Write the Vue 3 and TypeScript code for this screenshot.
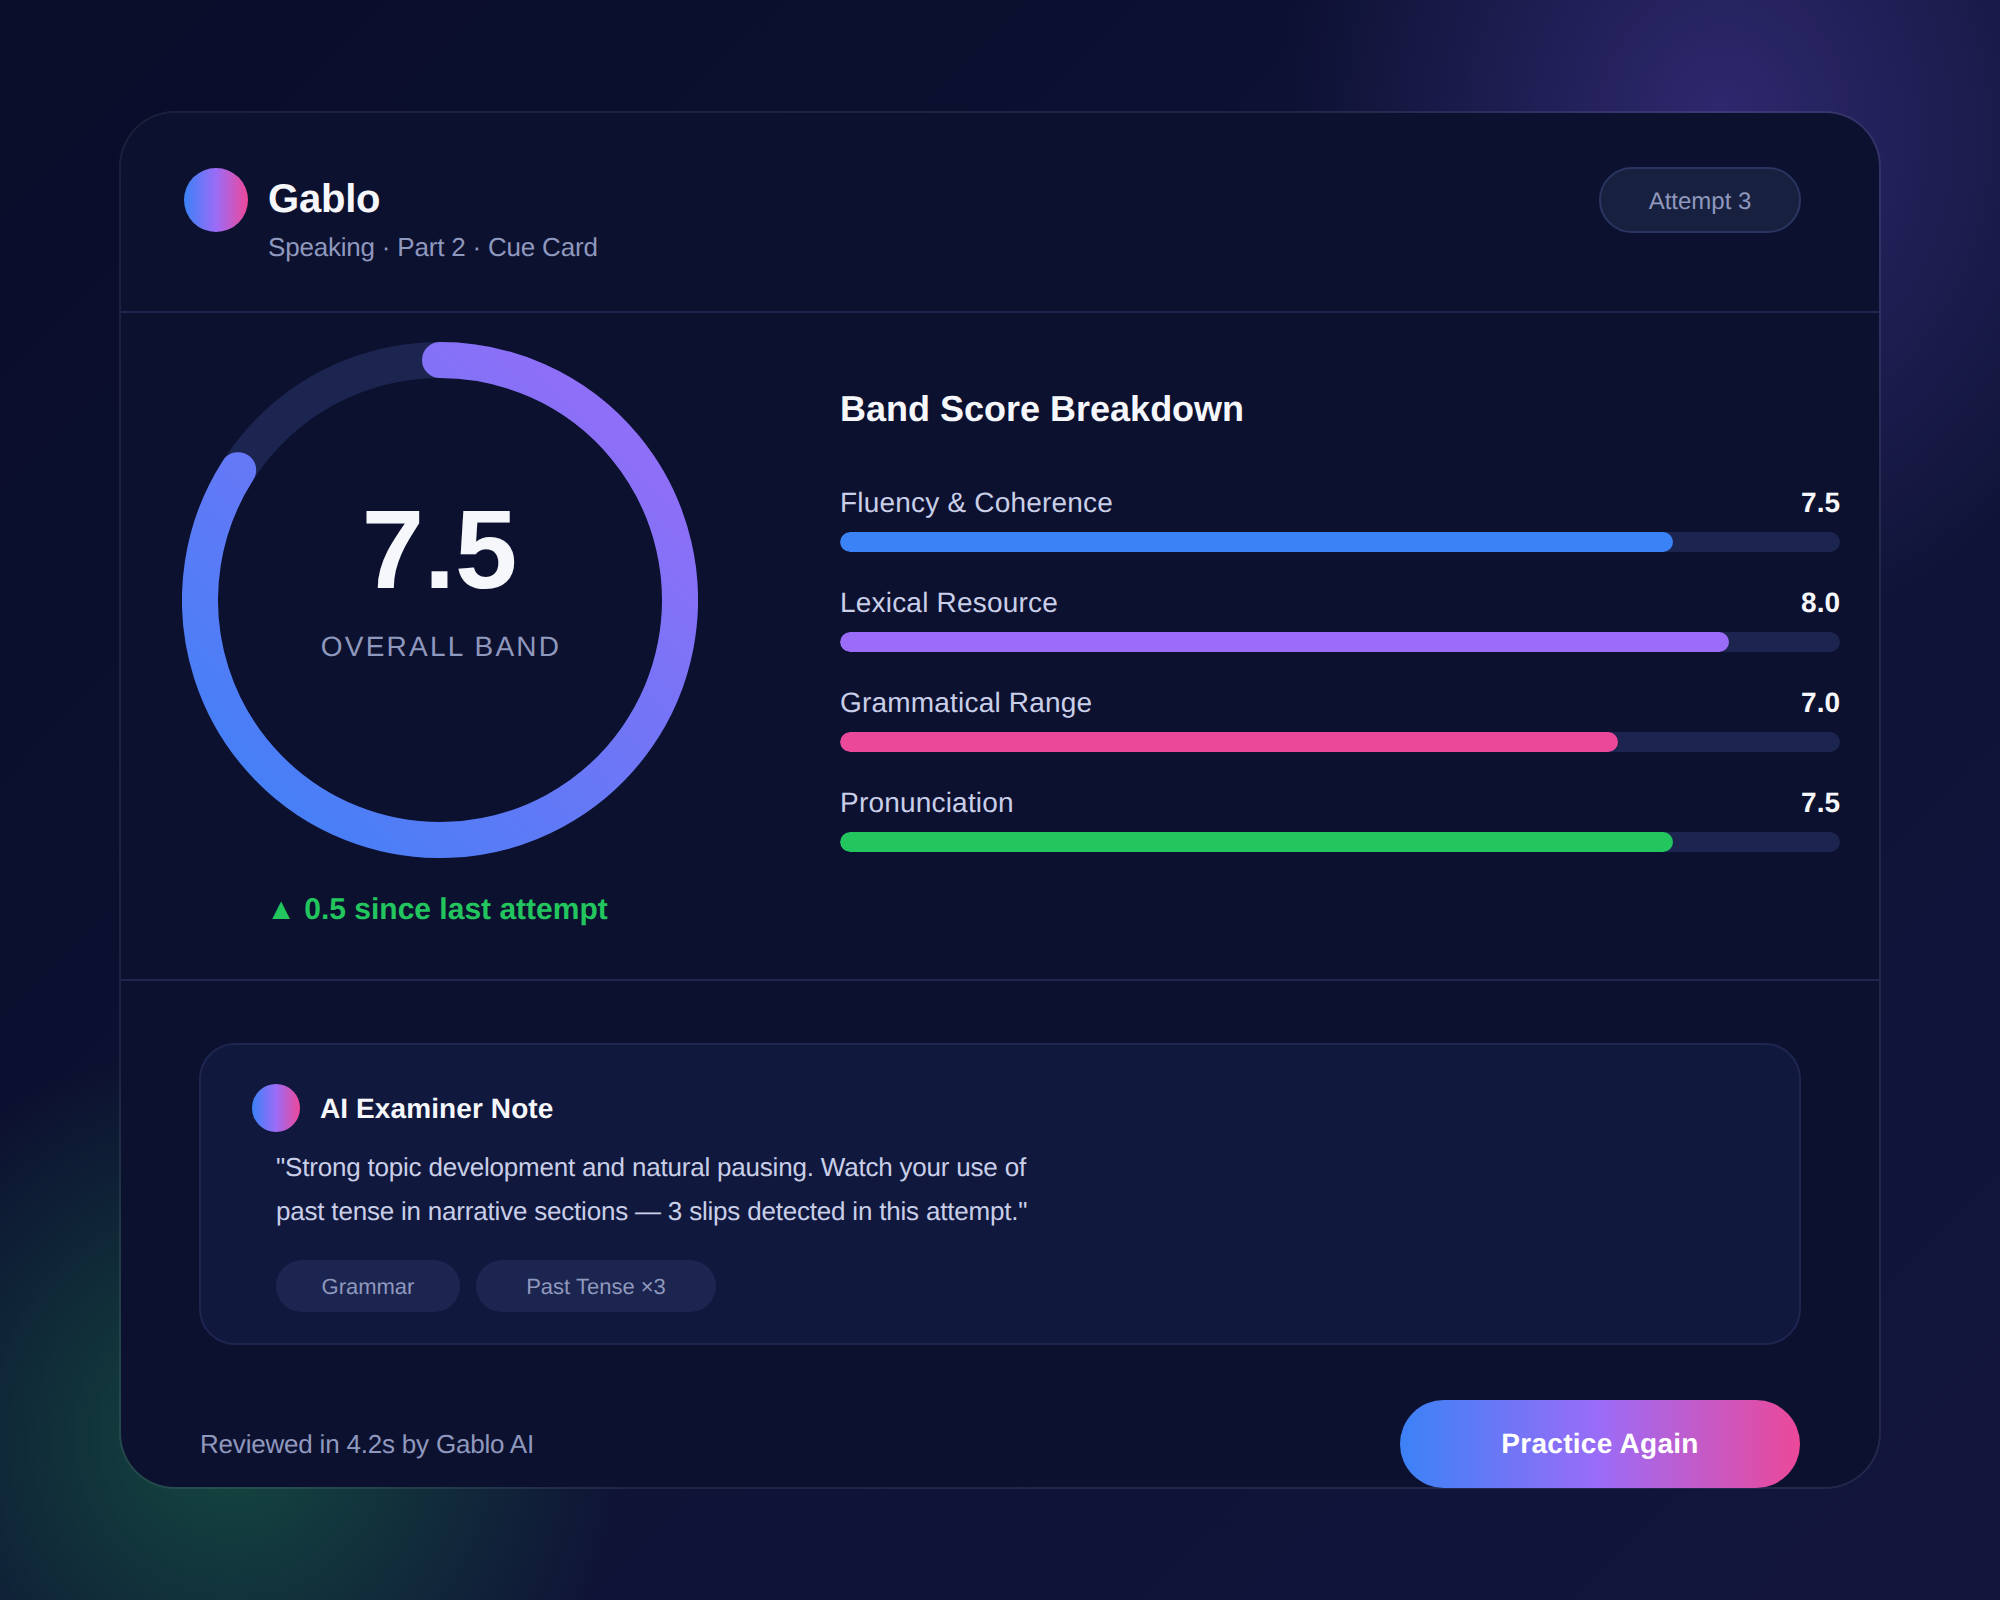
<template>
  <div class="page">
    <div class="card">
      <header class="card-head">
        <div class="brand">
          <div class="brand-top">
            <span class="dot dot-lg"></span>
            <span class="brand-name">Gablo</span>
          </div>
          <div class="brand-sub">Speaking · Part 2 · Cue Card</div>
        </div>
        <div class="attempt">Attempt 3</div>
      </header>

      <section class="results">
        <div class="overall">
          <div class="ring">
            <svg width="516" height="516" viewBox="0 0 516 516">
              <defs>
                <linearGradient id="ringGrad" x1="0" y1="1" x2="1" y2="0">
                  <stop offset="0" stop-color="#3b82f6" />
                  <stop offset="1" stop-color="#9b6cf7" />
                </linearGradient>
              </defs>
              <circle cx="258" cy="258" :r="radius" fill="none" stroke="#1c2550" stroke-width="36" />
              <path
                :d="arcPath"
                fill="none"
                stroke="url(#ringGrad)"
                stroke-width="36"
                stroke-linecap="round"
              />
            </svg>
            <div class="ring-label">
              <div class="ring-score">7.5</div>
              <div class="ring-caption">OVERALL BAND</div>
            </div>
          </div>
          <div class="delta">▲ 0.5 since last attempt</div>
        </div>

        <div class="breakdown">
          <h2 class="breakdown-title">Band Score Breakdown</h2>
          <div v-for="band in bands" :key="band.name" class="band">
            <div class="band-row">
              <span class="band-name">{{ band.name }}</span>
              <span class="band-value">{{ band.score.toFixed(1) }}</span>
            </div>
            <div class="band-track">
              <div class="band-fill" :style="{ width: `${(band.score / 9) * 100}%`, background: band.color }"></div>
            </div>
          </div>
        </div>
      </section>

      <section class="bottom">
        <div class="note">
          <div class="note-head">
            <span class="dot dot-sm"></span>
            <span class="note-title">AI Examiner Note</span>
          </div>
          <p class="note-text">"Strong topic development and natural pausing. Watch your use of<br />past tense in narrative sections — 3 slips detected in this attempt."</p>
          <div class="chips">
            <span class="chip chip-grammar">Grammar</span>
            <span class="chip chip-tense">Past Tense ×3</span>
          </div>
        </div>
        <div class="foot">
          <span class="foot-text">Reviewed in 4.2s by Gablo AI</span>
          <button class="practice">Practice Again</button>
        </div>
      </section>
    </div>
  </div>
</template>

<script setup lang="ts">
import { computed } from 'vue'

interface Band {
  name: string
  score: number
  color: string
}

const radius = 240
const ringProgress = 0.841

const bands: Band[] = [
  { name: 'Fluency & Coherence', score: 7.5, color: '#3b82f6' },
  { name: 'Lexical Resource', score: 8, color: '#9b6cf7' },
  { name: 'Grammatical Range', score: 7, color: '#ec4899' },
  { name: 'Pronunciation', score: 7.5, color: '#22c55e' }
]

const arcPath = computed(() => {
  const angle = ringProgress * 2 * Math.PI
  const x = 258 + radius * Math.sin(angle)
  const y = 258 - radius * Math.cos(angle)
  return `M 258 18 A ${radius} ${radius} 0 1 1 ${x.toFixed(2)} ${y.toFixed(2)}`
})
</script>

<style>
body {
  margin: 0;
}
</style>

<style scoped>
.page {
  box-sizing: border-box;
  width: 2000px;
  height: 1600px;
  padding: 111px 119px;
  font-family: "Liberation Sans", Arial, sans-serif;
  text-rendering: geometricPrecision;
  background:
    radial-gradient(440px 520px at 1720px 120px, rgba(120, 92, 246, 0.3), rgba(120, 92, 246, 0)),
    radial-gradient(circle 400px at 230px 1440px, rgba(34, 197, 94, 0.3), rgba(34, 197, 94, 0)),
    linear-gradient(135deg, #090d2a 0%, #0f1336 60%, #13153d 100%);
}

.card {
  box-sizing: border-box;
  width: 1762px;
  height: 1378px;
  background: #0d1130;
  background-clip: padding-box;
  border: 2px solid rgba(255, 255, 255, 0.08);
  border-radius: 56px;
}

.card-head {
  box-sizing: border-box;
  height: 200px;
  display: flex;
  justify-content: space-between;
  align-items: flex-start;
  padding: 54px 78px 0 63px;
  border-bottom: 2px solid #1e2650;
}

.brand {
  margin-top: 1px;
}

.brand-top {
  display: flex;
  align-items: center;
  gap: 20px;
}

.dot {
  display: block;
  border-radius: 50%;
  background: linear-gradient(90deg, #3b82f6, #9b6cf7, #ec4899);
}

.dot-lg {
  width: 64px;
  height: 64px;
}

.dot-sm {
  width: 48px;
  height: 48px;
}

.brand-name {
  padding-bottom: 2px;
  font-size: 40px;
  letter-spacing: -0.2px;
  font-weight: 700;
  color: #f5f7fb;
}

.brand-sub {
  margin: -1px 0 0 84px;
  font-size: 26px;
  line-height: 32px;
  letter-spacing: -0.2px;
  color: #8f98bd;
}

.attempt {
  box-sizing: border-box;
  width: 202px;
  height: 66px;
  line-height: 66px;
  text-align: center;
  font-size: 24px;
  color: #8f98bd;
  background: #17203f;
  border: 2px solid #2a3560;
  border-radius: 33px;
}

.results {
  box-sizing: border-box;
  height: 668px;
  display: flex;
  border-bottom: 2px solid #1e2650;
  padding: 29px 0 0 61px;
  gap: 142px;
}

.overall {
  width: 516px;
}

.ring {
  position: relative;
  width: 516px;
  height: 516px;
}

.ring svg {
  display: block;
}

.ring-label {
  position: absolute;
  inset: 144px 0 auto;
  display: flex;
  flex-direction: column;
  align-items: center;
}

.ring-score {
  margin-left: -1px;
  font-size: 112px;
  line-height: 128px;
  font-weight: 700;
  color: #f5f7fb;
}

.ring-caption {
  margin: 17px 0 0 2px;
  font-size: 28px;
  letter-spacing: 2.24px;
  color: #8f98bd;
}

.delta {
  margin-top: 35px;
  padding-right: 6px;
  text-align: center;
  font-size: 30px;
  font-weight: 700;
  color: #22c55e;
}

.breakdown {
  width: 1000px;
  padding-top: 46px;
}

.breakdown-title {
  margin: 0 0 54px;
  font-size: 36px;
  line-height: 41px;
  font-weight: 700;
  color: #f5f7fb;
}

.band {
  margin-bottom: 31px;
}

.band-row {
  display: flex;
  justify-content: space-between;
  align-items: center;
  height: 40px;
  margin-bottom: 9px;
}

.band-name {
  font-size: 28px;
  letter-spacing: 0.2px;
  color: #c9cfe8;
}

.band-value {
  font-size: 28px;
  font-weight: 700;
  color: #f5f7fb;
}

.band-track {
  height: 20px;
  background: #1c2550;
  border-radius: 10px;
  overflow: hidden;
}

.band-fill {
  height: 100%;
  border-radius: 10px;
}

.bottom {
  padding: 62px 78px 0;
}

.note {
  box-sizing: border-box;
  height: 302px;
  background: #11183d;
  border: 2px solid #1e2650;
  border-radius: 36px;
  padding: 39px 51px;
}

.note-head {
  display: flex;
  align-items: center;
  gap: 20px;
}

.note-title {
  padding-top: 2px;
  font-size: 28px;
  letter-spacing: 0.1px;
  font-weight: 700;
  color: #f5f7fb;
}

.note-text {
  margin: 13px 0 0 24px;
  font-size: 26px;
  line-height: 44px;
  letter-spacing: -0.2px;
  color: #c9cfe8;
}

.chips {
  display: flex;
  gap: 16px;
  margin: 27px 0 0 24px;
}

.chip {
  box-sizing: border-box;
  height: 52px;
  line-height: 54px;
  text-align: center;
  font-size: 22px;
  color: #8f98bd;
  background: #1c2550;
  border-radius: 26px;
}

.chip-grammar {
  width: 184px;
}

.chip-tense {
  width: 240px;
}

.foot {
  display: flex;
  justify-content: space-between;
  align-items: center;
  margin: 55px 1px 0 0;
}

.foot-text {
  margin-left: 1px;
  font-size: 26px;
  letter-spacing: -0.2px;
  color: #8f98bd;
}

.practice {
  width: 400px;
  height: 88px;
  border: none;
  border-radius: 44px;
  font-family: inherit;
  font-size: 28px;
  font-weight: 700;
  letter-spacing: 0.28px;
  text-rendering: inherit;
  color: #ffffff;
  background: linear-gradient(90deg, #3b82f6, #9b6cf7, #ec4899);
}
</style>
